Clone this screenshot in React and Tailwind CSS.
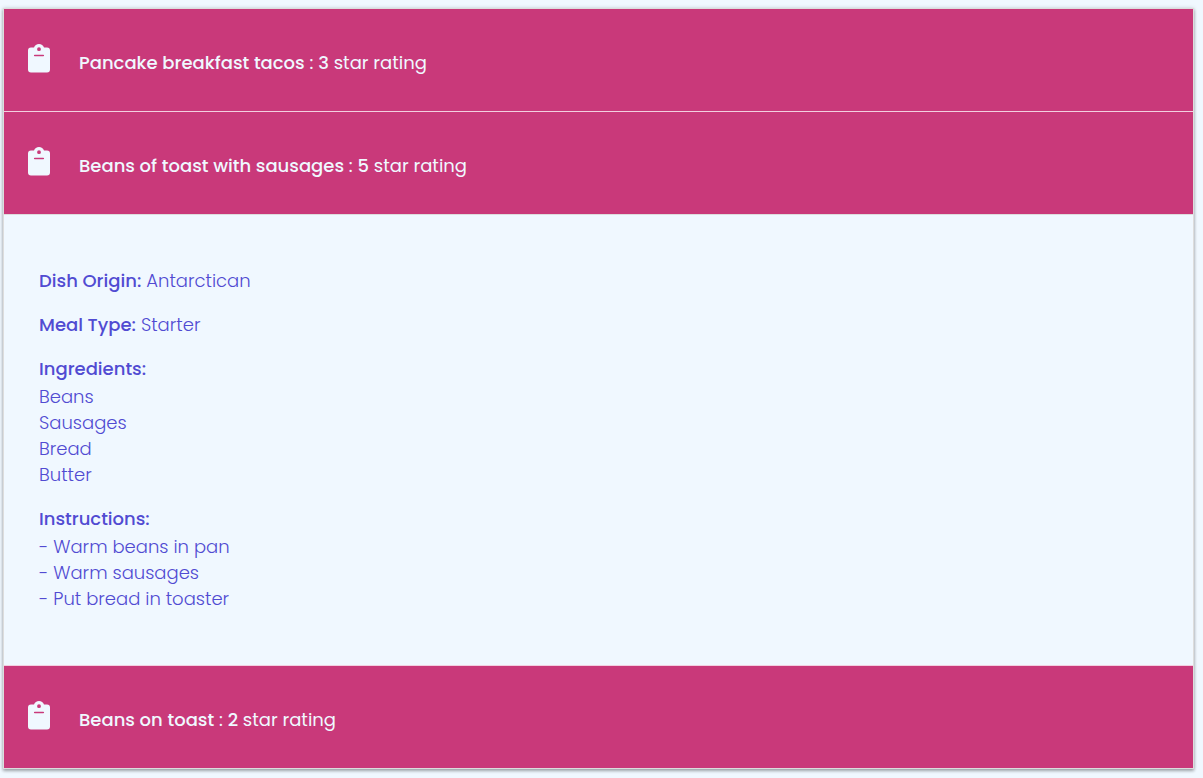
import { useState } from "react";

const recipes = [
  {
    name: "Pancake breakfast tacos",
    rating: 3,
    origin: "Mexican",
    meal: "Breakfast",
    ingredients: ["Pancakes", "Eggs"],
    instructions: ["Warm pancakes", "Fill with eggs"],
  },
  {
    name: "Beans of toast with sausages",
    rating: 5,
    origin: "Antarctican",
    meal: "Starter",
    ingredients: ["Beans", "Sausages", "Bread", "Butter"],
    instructions: ["Warm beans in pan", "Warm sausages", "Put bread in toaster"],
  },
  {
    name: "Beans on toast",
    rating: 2,
    origin: "British",
    meal: "Starter",
    ingredients: ["Beans", "Bread"],
    instructions: ["Warm beans in pan", "Put bread in toaster"],
  },
];

function ClipboardIcon() {
  return (
    <svg viewBox="0 0 22 29" className="mb-1 h-[29px] w-[22px] shrink-0" aria-hidden="true">
      <path
        fill="#f0f8ff"
        fillRule="evenodd"
        d="M3 3.500H6C6.800 1.300 8.700 0 11 0s4.200 1.300 5 3.500H19a3 3 0 0 1 3 3V25.500a3 3 0 0 1-3 3H3a3 3 0 0 1-3-3V6.500a3 3 0 0 1 3-3ZM11 3.300a1.900 1.900 0 1 0 0 3.800 1.900 1.900 0 0 0 0-3.800ZM6.700 10.700a.8.8 0 0 0 0 1.600h8.600a.8.8 0 0 0 0-1.600Z"
      />
    </svg>
  );
}

function Details({ recipe }) {
  return (
    <div className="flex flex-col gap-[18px] px-[35px] py-[53px] text-[18px] leading-[26px] font-light text-[#514bd2]">
      <p>
        <strong className="font-medium">Dish Origin:</strong> {recipe.origin}
      </p>
      <p>
        <strong className="font-medium">Meal Type:</strong> {recipe.meal}
      </p>
      <section>
        <h3 className="font-medium">Ingredients:</h3>
        <ul className="mt-0.5">
          {recipe.ingredients.map((item) => (
            <li key={item}>{item}</li>
          ))}
        </ul>
      </section>
      <section>
        <h3 className="font-medium">Instructions:</h3>
        <ul className="mt-0.5">
          {recipe.instructions.map((step) => (
            <li key={step}>- {step}</li>
          ))}
        </ul>
      </section>
    </div>
  );
}

export default function App() {
  const [open, setOpen] = useState(1);
  return (
    <main className="min-h-screen bg-[#f0f8ff] pt-2 pr-[9px] pb-2 pl-[3px] font-['Poppins','Inter',sans-serif]">
      <ul className="border border-[#dddddd] shadow-[0_2px_3px_0_rgba(0,0,0,0.3),0_0_4px_0_rgba(0,0,0,0.16)]">
        {recipes.map((recipe, i) => (
          <li key={recipe.name} className="border-b border-[#f3cfe0] last:border-b-0">
            <button
              type="button"
              aria-expanded={open === i}
              onClick={() => setOpen(open === i ? -1 : i)}
              className="flex h-[102px] w-full cursor-pointer items-center gap-[29px] bg-[#c9397a] px-6 text-left text-[18px] leading-[26px] text-[#f0f8ff]"
            >
              <ClipboardIcon />
              <span className="pt-1.5">
                <strong className="font-medium">{recipe.name}</strong> :{" "}
                <strong className="font-medium">{recipe.rating}</strong> star rating
              </span>
            </button>
            {open === i && (
              <div className="border-t border-[#dddddd]">
                <Details recipe={recipe} />
              </div>
            )}
          </li>
        ))}
      </ul>
    </main>
  );
}
